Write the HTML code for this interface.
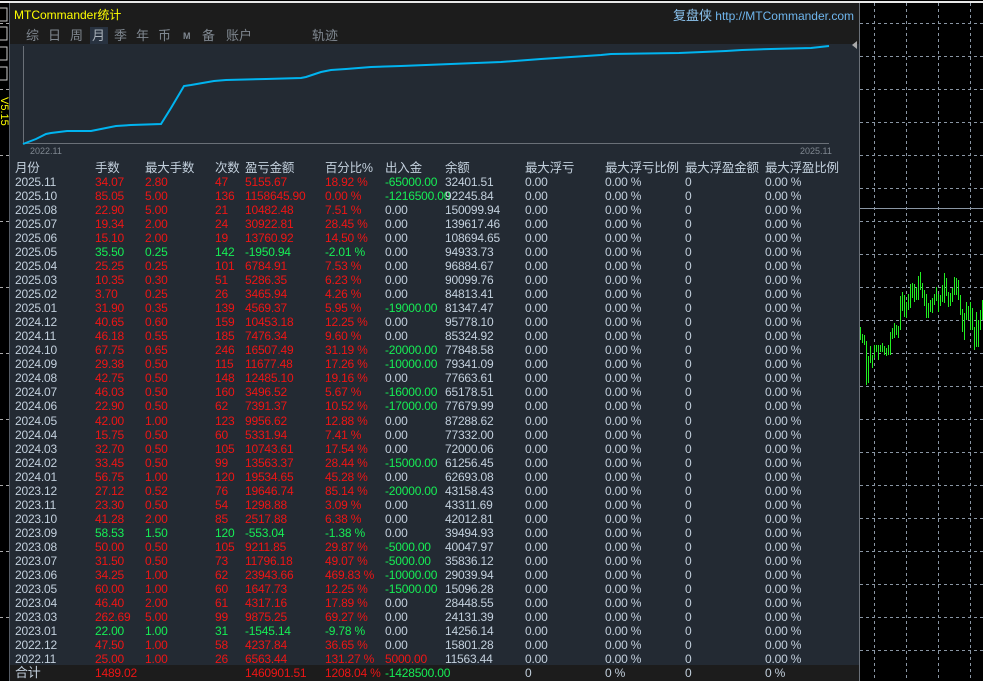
<!DOCTYPE html>
<html><head><meta charset="utf-8"><style>
*{margin:0;padding:0;box-sizing:border-box}
body{width:983px;height:681px;background:#000;position:relative;overflow:hidden;font-family:"Liberation Sans","Noto Sans CJK SC",sans-serif;font-size:12px}
.a{position:absolute;white-space:nowrap}
#panel{position:absolute;left:9px;top:3px;width:851px;height:678px;background:#232a33;border-left:1px solid #555c66;border-right:1px solid #6a7078}
.r{position:absolute;left:0;width:849px;height:14px;line-height:14px}
.r span{position:absolute;top:0;letter-spacing:-0.2px}
.g{color:#c3d0dd}.R{color:#ee1515}.G{color:#16ee55}
</style></head><body>
<div class="a" style="left:0;top:1px;width:983px;height:2px;background:#e8e8e8"></div>
<svg class="a" style="left:0;top:0" width="9" height="681">
<rect x="-2" y="8" width="9" height="13" fill="none" stroke="#ccc"/>
<rect x="-2" y="27" width="9" height="13" fill="none" stroke="#ccc"/>
<rect x="-2" y="47" width="9" height="13" fill="none" stroke="#ccc"/>
<rect x="-2" y="67" width="9" height="13" fill="none" stroke="#ccc"/>
<g stroke="#aaa" stroke-dasharray="3,3"><line x1="0" y1="23.5" x2="9" y2="23.5"/><line x1="0" y1="89.5" x2="9" y2="89.5"/><line x1="0" y1="155.5" x2="9" y2="155.5"/><line x1="0" y1="221.5" x2="9" y2="221.5"/><line x1="0" y1="287.5" x2="9" y2="287.5"/><line x1="0" y1="353.5" x2="9" y2="353.5"/><line x1="0" y1="419.5" x2="9" y2="419.5"/><line x1="0" y1="485.5" x2="9" y2="485.5"/><line x1="0" y1="551.5" x2="9" y2="551.5"/><line x1="0" y1="617.5" x2="9" y2="617.5"/></g>
<text x="0" y="98" fill="#ffff00" font-size="11" transform="rotate(90 1 98)" font-family="Liberation Sans">V5.15</text>
</svg>
<svg class="a" style="left:860px;top:0" width="123" height="681">
<g stroke="#8a96a4" stroke-dasharray="3,3">
<line x1="14.5" y1="3" x2="14.5" y2="681"/><line x1="46.5" y1="3" x2="46.5" y2="681"/><line x1="78.5" y1="3" x2="78.5" y2="681"/><line x1="110.5" y1="3" x2="110.5" y2="681"/>
<line x1="0" y1="23.5" x2="123" y2="23.5"/><line x1="0" y1="56.5" x2="123" y2="56.5"/><line x1="0" y1="89.5" x2="123" y2="89.5"/><line x1="0" y1="122.5" x2="123" y2="122.5"/><line x1="0" y1="155.5" x2="123" y2="155.5"/><line x1="0" y1="188.5" x2="123" y2="188.5"/><line x1="0" y1="221.5" x2="123" y2="221.5"/><line x1="0" y1="254.5" x2="123" y2="254.5"/><line x1="0" y1="287.5" x2="123" y2="287.5"/><line x1="0" y1="320.5" x2="123" y2="320.5"/><line x1="0" y1="353.5" x2="123" y2="353.5"/><line x1="0" y1="386.5" x2="123" y2="386.5"/><line x1="0" y1="419.5" x2="123" y2="419.5"/><line x1="0" y1="452.5" x2="123" y2="452.5"/><line x1="0" y1="485.5" x2="123" y2="485.5"/><line x1="0" y1="518.5" x2="123" y2="518.5"/><line x1="0" y1="551.5" x2="123" y2="551.5"/><line x1="0" y1="584.5" x2="123" y2="584.5"/><line x1="0" y1="617.5" x2="123" y2="617.5"/><line x1="0" y1="650.5" x2="123" y2="650.5"/></g>
<line x1="0" y1="208.5" x2="123" y2="208.5" stroke="#8a96a4"/>
<g stroke="#22ee22" stroke-width="1">
<path d="M0.5 327V340M2.5 334V343M4.5 335V345M6.5 341V385M8.5 356V383M10.5 346V363M12.5 355V368M14.5 345V358M16.5 345V352M18.5 345V360M20.5 345V352M22.5 343V352M24.5 346V355M26.5 348V356M28.5 345V355M30.5 332V355M32.5 328V339M34.5 323V338M36.5 325V335M38.5 326V338M40.5 296V330M42.5 292V311M44.5 295V317M46.5 302V318M48.5 294V310M50.5 284V308M52.5 283V298M54.5 284V302M56.5 288V300M58.5 276V300M60.5 272V290M62.5 283V298M64.5 290V306M66.5 294V318M68.5 303V318M70.5 300V312M72.5 298V313M74.5 294V305M76.5 287V301M78.5 294V312M80.5 295V306M82.5 285V302M84.5 273V303M86.5 278V296M88.5 292V307M90.5 293V306M92.5 288V302M94.5 277V295M96.5 278V295M98.5 280V300M100.5 295V315M102.5 309V332M104.5 313V340M106.5 302V320M108.5 306V320M110.5 302V330M112.5 308V330M114.5 327V350M116.5 312V347M118.5 320V347M120.5 310V330M122.5 300V320"/>
</g>
</svg>
<div id="panel">
<div class="a" style="left:0;top:0;width:849px;height:41px;background:#1c1c1c"></div>
<div class="a" style="left:4px;top:3px;color:#ffff00;font-size:12px">MTCommander统计</div>
<div class="a" style="right:5px;top:2px;font-size:12px;color:#6fb6ee"><span style="font-size:13px;color:#8cc4f0">复盘侠</span> http://MTCommander.com</div>
<div class="a" style="left:80px;top:24px;width:18px;height:17px;background:#283240"></div>
<div class="a" style="left:16px;top:24px;color:#7f8790;font-size:13px;line-height:17px">综</div>
<div class="a" style="left:38px;top:24px;color:#7f8790;font-size:13px;line-height:17px">日</div>
<div class="a" style="left:60px;top:24px;color:#7f8790;font-size:13px;line-height:17px">周</div>
<div class="a" style="left:82px;top:24px;color:#a9b1ba;font-size:13px;line-height:17px">月</div>
<div class="a" style="left:104px;top:24px;color:#7f8790;font-size:13px;line-height:17px">季</div>
<div class="a" style="left:126px;top:24px;color:#7f8790;font-size:13px;line-height:17px">年</div>
<div class="a" style="left:148px;top:24px;color:#7f8790;font-size:13px;line-height:17px">币</div>
<div class="a" style="left:173px;top:25px;color:#7f8790;font-size:9px;font-weight:bold;line-height:17px">M</div>
<div class="a" style="left:192px;top:24px;color:#7f8790;font-size:13px;line-height:17px">备</div>
<div class="a" style="left:216px;top:24px;color:#7f8790;font-size:13px;line-height:17px">账户</div>
<div class="a" style="left:302px;top:24px;color:#7f8790;font-size:13px;line-height:17px">轨迹</div>
<svg class="a" style="left:-9px;top:-3px" width="860" height="160">
<line x1="22.5" y1="46" x2="22.5" y2="144" stroke="#6a7078"/>
<line x1="22" y1="143.5" x2="828" y2="143.5" stroke="#6a7078"/>
<polyline fill="none" stroke="#00b4f0" stroke-width="2" points="22,144 35,139 45,134 50,133 58,132 66,131 90,131 95,130 105,128 115,126 130,125 160,124 170,108 183,86 190,85 213,81 225,80 265,79 300,78 305,77 320,72 330,70 345,69 370,67 400,66 450,64 500,62 540,59 570,57 600,55 610,54 678,53 725,51 741,50 770,49 810,48 828,46"/>
<text x="29" y="154" fill="#7f8790" font-size="9" font-family="Liberation Sans">2022.11</text>
<text x="799" y="154" fill="#7f8790" font-size="9" font-family="Liberation Sans">2025.11</text>
<path d="M851 45 L856 41 L856 49Z" fill="#aaa"/>
</svg>
<div class="a" style="left:0;top:662px;width:849px;height:16px;background:#1c1c1c"></div>
</div>
<div id="tbl" class="a" style="left:10px;top:0;width:849px;height:681px">
<div class="r" style="top:161px;font-size:12.5px;color:#c3d0dd"><span style="left:5px">月份</span><span style="left:85px">手数</span><span style="left:135px">最大手数</span><span style="left:205px">次数</span><span style="left:235px">盈亏金额</span><span style="left:315px">百分比%</span><span style="left:375px">出入金</span><span style="left:435px">余额</span><span style="left:515px">最大浮亏</span><span style="left:595px">最大浮亏比例</span><span style="left:675px">最大浮盈金额</span><span style="left:755px">最大浮盈比例</span></div>
</div>
<script>
var d=[
["2025.11","34.07","2.80","47","5155.67","18.92 %","-65000.00","32401.51"],
["2025.10","85.05","5.00","136","1158645.90","0.00 %","-1216500.00","92245.84"],
["2025.08","22.90","5.00","21","10482.48","7.51 %","0.00","150099.94"],
["2025.07","19.34","2.00","24","30922.81","28.45 %","0.00","139617.46"],
["2025.06","15.10","2.00","19","13760.92","14.50 %","0.00","108694.65"],
["2025.05","35.50","0.25","142","-1950.94","-2.01 %","0.00","94933.73"],
["2025.04","25.25","0.25","101","6784.91","7.53 %","0.00","96884.67"],
["2025.03","10.35","0.30","51","5286.35","6.23 %","0.00","90099.76"],
["2025.02","3.70","0.25","26","3465.94","4.26 %","0.00","84813.41"],
["2025.01","31.90","0.35","139","4569.37","5.95 %","-19000.00","81347.47"],
["2024.12","40.65","0.60","159","10453.18","12.25 %","0.00","95778.10"],
["2024.11","46.18","0.55","185","7476.34","9.60 %","0.00","85324.92"],
["2024.10","67.75","0.65","246","16507.49","31.19 %","-20000.00","77848.58"],
["2024.09","29.38","0.50","115","11677.48","17.26 %","-10000.00","79341.09"],
["2024.08","42.75","0.50","148","12485.10","19.16 %","0.00","77663.61"],
["2024.07","46.03","0.50","160","3496.52","5.67 %","-16000.00","65178.51"],
["2024.06","22.90","0.50","62","7391.37","10.52 %","-17000.00","77679.99"],
["2024.05","42.00","1.00","123","9956.62","12.88 %","0.00","87288.62"],
["2024.04","15.75","0.50","60","5331.94","7.41 %","0.00","77332.00"],
["2024.03","32.70","0.50","105","10743.61","17.54 %","0.00","72000.06"],
["2024.02","33.45","0.50","99","13563.37","28.44 %","-15000.00","61256.45"],
["2024.01","56.75","1.00","120","19534.65","45.28 %","0.00","62693.08"],
["2023.12","27.12","0.52","76","19646.74","85.14 %","-20000.00","43158.43"],
["2023.11","23.30","0.50","54","1298.88","3.09 %","0.00","43311.69"],
["2023.10","41.28","2.00","85","2517.88","6.38 %","0.00","42012.81"],
["2023.09","58.53","1.50","120","-553.04","-1.38 %","0.00","39494.93"],
["2023.08","50.00","0.50","105","9211.85","29.87 %","-5000.00","40047.97"],
["2023.07","31.50","0.50","73","11796.18","49.07 %","-5000.00","35836.12"],
["2023.06","34.25","1.00","62","23943.66","469.83 %","-10000.00","29039.94"],
["2023.05","60.00","1.00","60","1647.73","12.25 %","-15000.00","15096.28"],
["2023.04","46.40","2.00","61","4317.16","17.89 %","0.00","28448.55"],
["2023.03","262.69","5.00","99","9875.25","69.27 %","0.00","24131.39"],
["2023.01","22.00","1.00","31","-1545.14","-9.78 %","0.00","14256.14"],
["2022.12","47.50","1.00","58","4237.84","36.65 %","0.00","15801.28"],
["2022.11","25.00","1.00","26","6563.44","131.27 %","5000.00","11563.44"]];
var L=[5,85,135,205,235,315,375,435,515,595,675,755],h="";
d.forEach(function(r,i){var c=r[4][0]=="-"?"G":"R";var io=r[6]=="0.00"?"g":(r[6][0]=="-"?"G":"R");
var v=[[r[0],"g"],[r[1],c],[r[2],c],[r[3],c],[r[4],c],[r[5],c],[r[6],io],[r[7],"g"],["0.00","g"],["0.00 %","g"],["0","g"],["0.00 %","g"]];
h+='<div class="r" style="top:'+(175+i*14.03)+'px">';v.forEach(function(x,j){h+='<span class="'+x[1]+'" style="left:'+L[j]+'px">'+x[0]+'</span>'});h+='</div>';});
h+='<div class="r" style="top:666px"><span class="g" style="left:5px;font-size:13px">合计</span><span class="R" style="left:85px">1489.02</span><span class="R" style="left:235px">1460901.51</span><span class="R" style="left:315px">1208.04 %</span><span class="G" style="left:375px">-1428500.00</span><span class="g" style="left:515px">0</span><span class="g" style="left:595px">0 %</span><span class="g" style="left:675px">0</span><span class="g" style="left:755px">0 %</span></div>';
document.getElementById("tbl").insertAdjacentHTML("beforeend",h);
</script>
</body></html>
